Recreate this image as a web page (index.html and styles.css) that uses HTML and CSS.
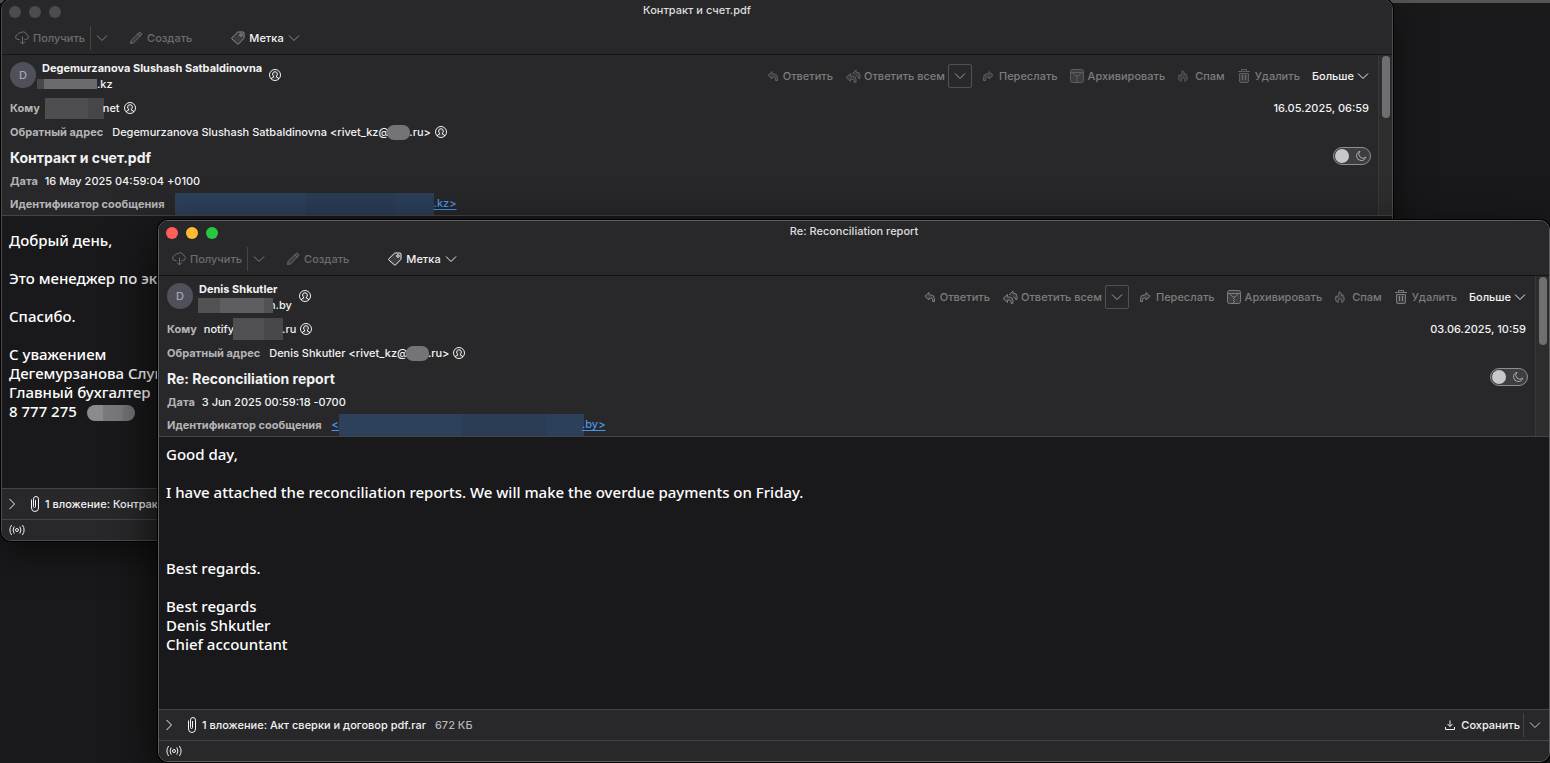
FILE: index.html
```html
<!DOCTYPE html>
<html lang="ru">
<head>
  <meta charset="UTF-8" />
  <meta name="viewport" content="width=device-width, initial-scale=1.0"/>
  <title>Re: Reconciliation report</title>
  <link rel="stylesheet" href="styles.css">
</head>
<body>

  <svg class="sprite" aria-hidden="true">
    <symbol id="i-cloud" viewBox="0 0 14 14">
      <path d="M4.5 8.500H3A2.600 2.600 0 0 1 .6 6a2.500 2.500 0 0 1 2.100-2.400A2.200 2.200 0 0 1 5.800 1.900 3.200 3.200 0 0 1 11.300 3.200 2.800 2.800 0 0 1 13.400 5.800a2.700 2.700 0 0 1-2.700 2.700H9.500"/>
      <path d="M7.500 5.500v7.500M5 10.500 7.500 13l2.500-2.500"/>
    </symbol>
    <symbol id="i-pencil" viewBox="0 0 14 14">
      <path class="soft" d="M1.500 12.500 2.300 9.300 10.100 1.500q.8-.7 1.600 0l.8.8q.7.8 0 1.600L4.700 11.700z"/>
      <path d="M8.900 2.700l2.400 2.400"/>
    </symbol>
    <symbol id="i-tag" viewBox="0 0 14 14">
      <path class="soft" d="M7.200 1H12q1 0 1 1v4.800q0 .5-.4.900L7.700 12.800q-.7.700-1.400 0L.9 8q-.6-.6 0-1.300L6.300 1.400q.4-.4.900-.4z"/>
      <circle cx="10" cy="4" r="1.300"/>
    </symbol>
    <symbol id="i-down" viewBox="0 0 12 12"><path d="M1 3.500 6 8.500l5-5"/></symbol>
    <symbol id="i-right" viewBox="0 0 12 12"><path d="M3.500 1l5 5-5 5"/></symbol>
    <symbol id="i-person" viewBox="0 0 14 14">
      <circle cx="7" cy="7" r="5.500"/>
      <path class="soft" d="M3.500 11.200V10l2-.8V8Q4.600 7.400 4.600 6A2.400 2.400 0 0 1 7 3.700 2.400 2.400 0 0 1 9.400 6q0 1.400-.9 2v1.200l2 .8v1.200"/>
    </symbol>
    <symbol id="i-reply" viewBox="0 0 12 12">
      <path class="soft" d="M5 1.500.9 5.300 5 9V7h1.500Q8.500 7 8.500 9v1.500h2V7.800q0-4-4-4H5z"/>
    </symbol>
    <symbol id="i-replyall" viewBox="0 0 16 14">
      <path class="soft" d="M5.500 4.500 1 8.500l4.500 4v-2.300h1.800q1.700 0 1.700 1.300v1.800h2V10.500q0-3.500-3.500-3.500h-2z"/>
      <path class="soft" d="M7 5l4-4.100v2.300q3.800-.5 4 3V9.500h-1.500q0-2.500-2-2.500"/>
    </symbol>
    <symbol id="i-forward" viewBox="0 0 12 12">
      <path class="soft" d="M7 1.500l4.100 3.800L7 9V7H5.500Q3.500 7 3.500 9v1.500h-2V7.800q0-4 4-4H7z"/>
    </symbol>
    <symbol id="i-archive" viewBox="0 0 14 14">
      <rect class="soft" x=".5" y=".5" width="13" height="13" rx="2"/>
      <path d="M.5 3.500h13M2.500 3.700 6 7h2l3.500-3.300"/>
      <path stroke-dasharray="1 1" d="M6.500 8v5M7.500 7v6"/>
    </symbol>
    <symbol id="i-flame" viewBox="0 0 12 14">
      <path class="soft" d="M4 13.300C0 12 .2 8.300 1.600 5.600l1.300 1.700C3.500 4.500 5.500 3.500 5 .8c2.400 1 3 3 3 4.800l1.200-1.300c1.900 3.200 3 7.500-1.200 9 .6-2-.4-3-2-4.500-1.600 1.500-2.600 2.500-2 4.500z"/>
    </symbol>
    <symbol id="i-trash" viewBox="0 0 14 14">
      <path d="M1 2.500h12M4.500 2.500v-2h5v2M5.500 6v5M8.500 6v5"/>
      <path class="soft" d="M2.500 4.500h9v7.500q0 1.500-1.500 1.500H4Q2.500 13.500 2.500 12z"/>
    </symbol>
    <symbol id="i-moon" viewBox="0 0 12 12">
      <path d="M5 1.300A4.700 4.700 0 1 0 10.800 7 3.800 3.800 0 0 1 5 1.300z"/>
    </symbol>
    <symbol id="i-clip" viewBox="0 0 10 18">
      <path d="M5.500 5v6.500q0 1-1 1t-1-1V4q0-2.500 2.500-2.500T8.500 4v9q0 3.500-3.500 3.500T1.500 13V4.500"/>
    </symbol>
    <symbol id="i-save" viewBox="0 0 12 12">
      <path d="M6 1.500v6M3.500 5 6 7.500 8.500 5M1.500 8v2.500h9V8"/>
    </symbol>
    <symbol id="i-signal" viewBox="0 0 16 12">
      <circle cx="8" cy="6" r="1.500"/>
      <path d="M5.200 2.500q-2.300 3.500 0 7M10.800 2.500q2.300 3.500 0 7M2.600 1q-3.400 5 0 10M13.400 1q3.400 5 0 10"/>
    </symbol>
  </svg>

  <main class="desktop">

    <section class="window window-back">
      <header class="titlebar">
        <div class="lights"><i></i><i></i><i></i></div>
        <h1>Контракт и счет.pdf</h1>
      </header>

      <nav class="toolbar">
        <button class="btn dim"><svg class="i14"><use href="#i-cloud"/></svg>Получить</button>
        <button class="btn split" aria-label="Параметры получения"><svg class="i12"><use href="#i-down"/></svg></button>
        <button class="btn dim compose"><svg class="i14"><use href="#i-pencil"/></svg>Создать</button>
        <button class="btn tag"><svg class="i14"><use href="#i-tag"/></svg>Метка<svg class="i12"><use href="#i-down"/></svg></button>
      </nav>

      <div class="head">
        <div class="fields">
          <div class="row from">
            <span class="avatar">D</span>
            <div class="sender">
              <strong>Degemurzanova Slushash Satbaldinovna</strong>
              <span class="mail"><span class="mask mask-a"></span>.kz</span>
            </div>
            <svg class="i14 person"><use href="#i-person"/></svg>
            <div class="actions">
              <button class="btn act"><svg class="i12"><use href="#i-reply"/></svg>Ответить</button>
              <button class="btn act all"><svg class="i16"><use href="#i-replyall"/></svg>Ответить всем</button>
              <button class="btn drop" aria-label="Варианты ответа"><svg class="i12"><use href="#i-down"/></svg></button>
              <button class="btn act fwd"><svg class="i12"><use href="#i-forward"/></svg>Переслать</button>
              <button class="btn act"><svg class="i14"><use href="#i-archive"/></svg>Архивировать</button>
              <button class="btn act spam"><svg class="i12"><use href="#i-flame"/></svg>Спам</button>
              <button class="btn act"><svg class="i14"><use href="#i-trash"/></svg>Удалить</button>
              <button class="btn more">Больше<svg class="i12"><use href="#i-down"/></svg></button>
            </div>
          </div>
          <div class="row">
            <b>Кому</b><span class="mask mask-b"></span><span>net</span>
            <svg class="i14 after"><use href="#i-person"/></svg>
            <time>16.05.2025, 06:59</time>
          </div>
          <div class="row reply-to">
            <b>Обратный адрес</b><span>Degemurzanova Slushash Satbaldinovna &lt;rivet_kz@</span><span class="mask mask-c"></span><span>.ru&gt;</span>
            <svg class="i14 after"><use href="#i-person"/></svg>
          </div>
          <div class="row topic">
            <h2>Контракт и счет.pdf</h2>
            <label class="toggle"><input type="checkbox" aria-label="Тёмный режим"><svg class="i12"><use href="#i-moon"/></svg></label>
          </div>
          <div class="row date"><b>Дата</b><span>16 May 2025 04:59:04 +0100</span></div>
          <div class="row ident"><b>Идентификатор сообщения</b><a href="#"><span class="mask mask-d"></span>.kz&gt;</a></div>
        </div>
        <div class="scroll"><div class="thumb"></div></div>
      </div>

      <article class="message">
        <p>Добрый день,</p>
        <p>Это менеджер по эк</p>
        <p>Спасибо.</p>
        <p>С уважением<br>Дегемурзанова Слуш<br>Главный бухгалтер<br>8 777 275<span class="mask mask-e"></span></p>
      </article>

      <footer class="attach">
        <button class="btn" aria-label="Показать вложения"><svg class="i12"><use href="#i-right"/></svg></button>
        <svg class="clip"><use href="#i-clip"/></svg>
        <span>1 вложение: Контрак</span>
      </footer>
      <div class="status"><svg class="i16"><use href="#i-signal"/></svg></div>
    </section>

    <section class="window window-front">
      <header class="titlebar">
        <div class="lights"><i></i><i></i><i></i></div>
        <h1>Re: Reconciliation report</h1>
      </header>

      <nav class="toolbar">
        <button class="btn dim"><svg class="i14"><use href="#i-cloud"/></svg>Получить</button>
        <button class="btn split" aria-label="Параметры получения"><svg class="i12"><use href="#i-down"/></svg></button>
        <button class="btn dim compose"><svg class="i14"><use href="#i-pencil"/></svg>Создать</button>
        <button class="btn tag"><svg class="i14"><use href="#i-tag"/></svg>Метка<svg class="i12"><use href="#i-down"/></svg></button>
      </nav>

      <div class="head">
        <div class="fields">
          <div class="row from">
            <span class="avatar">D</span>
            <div class="sender">
              <strong>Denis Shkutler</strong>
              <span class="mail"><span class="mask mask-f"></span>n.by</span>
            </div>
            <svg class="i14 person"><use href="#i-person"/></svg>
            <div class="actions">
              <button class="btn act"><svg class="i12"><use href="#i-reply"/></svg>Ответить</button>
              <button class="btn act all"><svg class="i16"><use href="#i-replyall"/></svg>Ответить всем</button>
              <button class="btn drop" aria-label="Варианты ответа"><svg class="i12"><use href="#i-down"/></svg></button>
              <button class="btn act fwd"><svg class="i12"><use href="#i-forward"/></svg>Переслать</button>
              <button class="btn act"><svg class="i14"><use href="#i-archive"/></svg>Архивировать</button>
              <button class="btn act spam"><svg class="i12"><use href="#i-flame"/></svg>Спам</button>
              <button class="btn act"><svg class="i14"><use href="#i-trash"/></svg>Удалить</button>
              <button class="btn more">Больше<svg class="i12"><use href="#i-down"/></svg></button>
            </div>
          </div>
          <div class="row">
            <b>Кому</b><span>notify</span><span class="mask mask-g"></span><span>.ru</span>
            <svg class="i14 after"><use href="#i-person"/></svg>
            <time>03.06.2025, 10:59</time>
          </div>
          <div class="row reply-to">
            <b>Обратный адрес</b><span>Denis Shkutler &lt;rivet_kz@</span><span class="mask mask-c"></span><span>.ru&gt;</span>
            <svg class="i14 after"><use href="#i-person"/></svg>
          </div>
          <div class="row topic">
            <h2>Re: Reconciliation report</h2>
            <label class="toggle"><input type="checkbox" aria-label="Тёмный режим"><svg class="i12"><use href="#i-moon"/></svg></label>
          </div>
          <div class="row date"><b>Дата</b><span>3 Jun 2025 00:59:18 -0700</span></div>
          <div class="row ident"><b>Идентификатор сообщения</b><a href="#">&lt;<span class="mask mask-h"></span>.by&gt;</a></div>
        </div>
        <div class="scroll"><div class="thumb"></div></div>
      </div>

      <article class="message">
        <p>Good day,</p>
        <p>I have attached the reconciliation reports. We will make the overdue payments on Friday.</p>
        <p class="spaced">Best regards.</p>
        <p>Best regards<br>Denis Shkutler<br>Chief accountant</p>
      </article>

      <footer class="attach">
        <button class="btn" aria-label="Показать вложения"><svg class="i12"><use href="#i-right"/></svg></button>
        <svg class="clip"><use href="#i-clip"/></svg>
        <span>1 вложение: Акт сверки и договор pdf.rar</span>
        <span class="size">672 КБ</span>
        <button class="btn save"><svg class="i12"><use href="#i-save"/></svg>Сохранить</button>
        <button class="btn split" aria-label="Варианты сохранения"><svg class="i12"><use href="#i-down"/></svg></button>
      </footer>
      <div class="status"><svg class="i16"><use href="#i-signal"/></svg></div>
    </section>

  </main>

</body>
</html>
```
FILE: styles.css
```css
:root {
  --panel: #28282a;
  --page: #19191b;
  --text: #f2f2f3;
  --label: #b4b4b6;
  --dim: #6c6c6e;
  --act: #7c7c7e;
  --line: #444446;
  --link: #4596f0;
}

* { box-sizing: border-box; margin: 0; padding: 0; }

body {
  font-family: Inter, 'Liberation Sans', sans-serif;
  font-size: 11px;
  font-weight: 500;
  line-height: 16px;
  color: var(--text);
  background: #151517;
  overflow: hidden;
}

.sprite {
  position: absolute;
  width: 0;
  height: 0;
}

svg {
  flex: none;
  fill: none;
  stroke: currentColor;
  stroke-width: 1;
  stroke-linejoin: round;
}

.soft { fill: rgba(255,255,255,0.1); }
.i12 { width: 12px; height: 12px; }
.i14 { width: 14px; height: 14px; }
.i16 { width: 16px; height: 14px; }

.desktop {
  position: relative;
  height: 100vh;
  background: var(--page);
  border-top: 3px solid #555553;
}

/* windows */
.window {
  position: absolute;
  display: flex;
  flex-direction: column;
  border: 1px solid #5e5e60;
  border-radius: 10px;
  background: var(--page);
  overflow: hidden;
  white-space: nowrap;
}

.window-back {
  inset: -4px 157px 222px 1px;
  border-color: #4c4c4e;
  box-shadow: 0 0 0 1px #000, 0 12px 36px rgba(0,0,0,0.5);
}

.window-front {
  inset: 217px 0 1px 158px;
  box-shadow: 0 0 0 1px #000, 0 16px 50px rgba(0,0,0,0.8);
}

.titlebar {
  position: relative;
  height: 22px;
  background: var(--panel);
  text-align: center;
}

.titlebar h1 {
  font-size: 11px;
  font-weight: 500;
  line-height: 20px;
  color: #dededf;
}

.lights {
  position: absolute;
  left: 7px;
  top: 6px;
  display: flex;
  gap: 8px;
}

.lights i {
  width: 12px;
  height: 12px;
  border-radius: 50%;
  background: #4c4c4e;
}

.window-front .lights i:nth-child(1) { background: #ff5f57; }
.window-front .lights i:nth-child(2) { background: #febc2e; }
.window-front .lights i:nth-child(3) { background: #28c840; }

/* buttons */
.btn {
  display: flex;
  align-items: center;
  border: none;
  background: none;
  color: inherit;
  font: inherit;
  gap: 4px;
}

.toolbar {
  display: flex;
  align-items: center;
  height: 33px;
  padding: 0 13px;
  background: var(--panel);
  border-bottom: 1px solid #131315;
}

.dim { color: var(--dim); }

.split {
  height: 24px;
  margin-left: 5px;
  padding-left: 5px;
  border-left: 1px solid var(--line);
  color: var(--act);
}

.compose { margin-left: 21px; }
.tag { margin-left: 39px; }
.window-back .tag svg { color: #8c8c8e; }

/* message header */
.head {
  display: flex;
  background: var(--panel);
  border-bottom: 1px solid var(--line);
}

.fields {
  flex: 1;
  min-width: 0;
  padding: 0 9px 0 8px;
}

.row {
  display: flex;
  align-items: center;
  height: 24px;
}

.row b {
  font-weight: 700;
  color: var(--label);
  margin-right: 7px;
}

.from { height: 40px; margin-bottom: 1px; }
.topic { height: 27px; }
.date { height: 20px; }
.ident { padding-top: 2px; }
.reply-to b { margin-right: 9px; }
.ident b { margin-right: 10px; }

.avatar {
  width: 26px;
  height: 26px;
  border-radius: 50%;
  background: #50505a;
  color: #a5a5ad;
  line-height: 26px;
  text-align: center;
}

.sender {
  display: flex;
  flex-direction: column;
  margin-left: 6px;
  padding-top: 2px;
}

.sender strong { font-weight: 700; }
.mail { display: flex; align-items: center; }
.person { margin-left: 6px; }
.after { margin-left: 3px; }

.mask {
  display: inline-block;
  flex: none;
  background: #505052;
}

.mask-a {
  width: 60px;
  height: 10px;
  margin-left: -5px;
  background: linear-gradient(90deg, #48484a 7px, #6b6b6d 7px);
}

.mask-b {
  width: 59px;
  height: 21px;
  margin: 0 -1px 0 -2px;
  background: linear-gradient(90deg, #4e4e50 43px, #464648 43px);
}

.mask-c {
  width: 23px;
  height: 15px;
  margin: 0 -1px 0 -2px;
  border-radius: 7px;
  background: #747476;
}

.mask-d, .mask-h {
  height: 22px;
  background: linear-gradient(90deg, #2d415b 50%, #2b3d55 50%, #2b3d55 85%, #2c405b 85%);
  vertical-align: middle;
}

.mask-d { width: 259px; }
.mask-h { width: 245px; margin-right: -2px; }

.mask-e {
  width: 48px;
  height: 16px;
  margin-left: 10px;
  border-radius: 8px;
  background: linear-gradient(90deg, #8b8b8d 16px, #7a7a7c 16px, #7a7a7c 36px, #727274 36px);
  vertical-align: middle;
}

.mask-f {
  width: 75px;
  height: 15px;
  margin: 0 -4px 0 -1px;
  background: linear-gradient(90deg, #525254 22px, #5e5e60 22px, #5e5e60 66px, #525254 66px);
  z-index: 1;
}

.mask-g {
  width: 50px;
  height: 22px;
  margin: 0 -1px;
  background: linear-gradient(90deg, #505052 31px, #48484a 31px);
}

.actions {
  display: flex;
  align-items: center;
  margin-left: auto;
  padding-top: 2px;
}

.act {
  margin-left: 12px;
  color: var(--act);
}

.all { gap: 3px; }

.window-back .act svg { color: #5e5e60; }

.drop {
  justify-content: center;
  width: 24px;
  height: 24px;
  margin-left: 3px;
  border: 1px solid #505052;
  border-radius: 2px;
  color: #a0a0a2;
}

.fwd { margin-left: 10px; gap: 5px; }
.spam { gap: 6px; }
.more { margin-left: 12px; gap: 3px; }

time { margin-left: auto; }

h2 {
  font-size: 14px;
  font-weight: 700;
}

.toggle {
  position: relative;
  display: flex;
  align-items: center;
  justify-content: flex-end;
  width: 38px;
  height: 18px;
  margin: 0 -2px 4px auto;
  padding-right: 3px;
  border: 1px solid #8e8e90;
  border-radius: 9px;
  background: #3e3e40;
  color: #a8a8aa;
}

.toggle input {
  appearance: none;
  position: absolute;
  left: 1px;
  top: 1px;
  width: 14px;
  height: 14px;
  border-radius: 50%;
  background: #c8c8ca;
}

a { color: var(--link); text-underline-offset: 2px; }

.scroll {
  width: 14px;
  padding: 1px 2px 0 3px;
  background: #2d2d2d;
  border-left: 1px solid #38383a;
}

.thumb {
  width: 8px;
  height: 68px;
  border-radius: 4px;
  background: #6f6f71;
}

.window-back .thumb { height: 62px; }

/* message text */
.message {
  flex: 1;
  min-height: 0;
  padding: 8px 7px;
  overflow: hidden;
  font-family: 'Noto Sans', 'Open Sans', sans-serif;
  font-size: 15px;
  font-weight: 550;
  line-height: 19px;
  color: #fff;
}

.window-back .message { padding-top: 15px; }
.message p { margin-bottom: 19px; }
.message .spaced { margin-top: 57px; }

/* bottom bars */
.attach {
  display: flex;
  align-items: center;
  height: 31px;
  padding: 0 8px 0 4px;
  background: var(--panel);
  border-top: 1px solid var(--line);
}

.clip {
  width: 10px;
  height: 18px;
  margin: 0 5px 0 12px;
}

.size {
  margin-left: 9px;
  color: var(--label);
}

.save { margin-left: auto; gap: 5px; }
.attach .split { margin-left: 3px; color: #c8c8ca; }

.status {
  display: flex;
  align-items: center;
  height: 21px;
  padding: 0 7px;
  background: var(--panel);
  border-top: 1px solid var(--line);
}
```
